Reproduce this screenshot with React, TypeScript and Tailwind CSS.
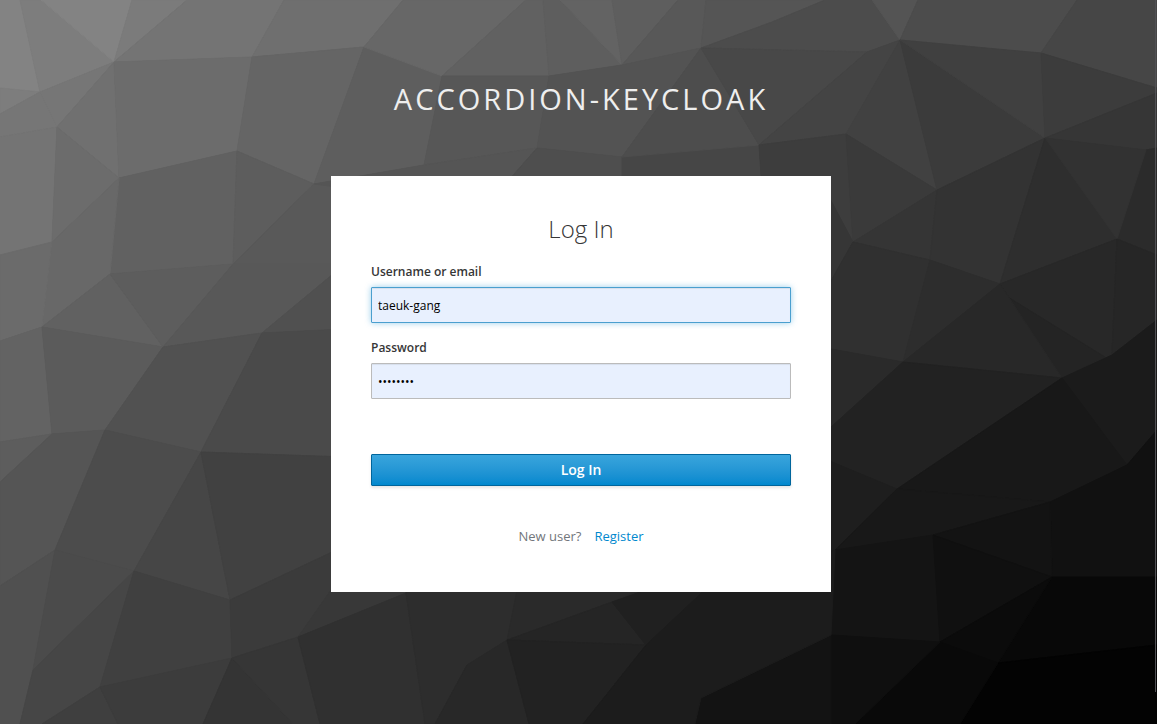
import { useState } from "react";

type Facet = [fill: string, points: string];

// Low-poly backdrop, drawn on a 1157 x 724 canvas.
const facets: Facet[] = [
  // top left
  ["#838383", "0,0 20,0 40,92 0,88"],
  ["#7d7d7d", "0,88 40,92 0,114"],
  ["#7d7d7d", "20,0 41,0 114,62 40,92"],
  ["#838383", "41,0 132,0 114,62"],
  ["#7b7b7b", "132,0 187,0 114,62"],
  ["#747474", "187,0 284,0 252,57 114,62"],
  ["#6f6f6f", "284,0 403,0 364,47 252,57"],
  ["#767676", "0,114 40,92 57,127 0,137"],
  ["#767676", "40,92 114,62 57,127"],
  ["#707070", "114,62 119,178 57,127"],
  ["#747474", "0,137 57,127 52,242 0,255"],
  ["#6c6c6c", "57,127 119,178 52,242"],
  ["#6c6c6c", "114,62 252,57 237,151 119,178"],
  ["#656565", "252,57 364,47 314,184 237,151"],
  ["#616161", "119,178 237,151 233,264 110,274"],
  ["#686868", "119,178 110,274 42,327 52,242"],
  ["#5d5d5d", "237,151 314,184 233,264"],
  ["#595959", "314,184 360,176 360,264 233,264"],
  ["#5e5e5e", "364,47 442,76 424,165 314,184"],
  ["#676767", "403,0 526,0 442,76 364,47"],
  ["#616161", "526,0 543,0 549,76 442,76"],
  ["#5e5e5e", "543,0 560,0 622,65 549,76"],
  ["#636363", "560,0 612,0 622,65"],
  ["#5e5e5e", "612,0 678,0 622,65"],
  ["#585858", "678,0 706,0 701,48 622,65"],
  ["#575757", "442,76 549,76 537,148 424,165"],
  ["#535353", "549,76 622,65 701,48 622,157 537,148"],
  ["#555555", "424,165 537,148 500,190 360,190 314,184"],
  ["#4e4e4e", "537,148 622,157 622,190 500,190"],
  ["#464646", "622,157 759,145 762,190 622,190"],
  ["#4d4d4d", "701,48 759,145 622,157"],
  ["#555555", "706,0 825,0 772,22 701,48"],
  ["#4c4c4c", "772,22 825,0 872,0 900,40 867,52 701,48"],
  ["#545454", "872,0 918,0 900,40"],
  ["#4c4c4c", "918,0 1077,0 1041,53 900,40"],
  ["#464646", "1077,0 1157,0 1157,88 1041,53"],
  ["#484848", "701,48 867,52 759,145"],
  ["#444444", "867,52 900,40 846,134 759,145"],
  ["#3d3d3d", "759,145 846,134 853,242 762,190"],
  // right side
  ["#414141", "900,40 937,190 846,134"],
  ["#3b3b3b", "900,40 1045,138 937,190"],
  ["#404040", "900,40 1041,53 1045,138"],
  ["#3c3c3c", "1041,53 1157,88 1157,93 1045,138"],
  ["#363636", "1045,138 1157,93 1157,148 1146,150"],
  ["#2b2b2b", "1157,148 1157,255 1117,239 1146,150"],
  ["#3a3a3a", "846,134 937,190 853,242"],
  ["#353535", "853,242 937,190 930,260"],
  ["#333333", "937,190 1045,138 1000,284 930,260"],
  ["#2e2e2e", "1045,138 1117,239 1000,284"],
  ["#323232", "1045,138 1146,150 1117,239"],
  ["#363636", "853,242 831,282 820,300 820,180"],
  ["#303030", "853,242 930,260 903,362 820,347 820,300"],
  ["#2d2d2d", "930,260 1000,284 903,362"],
  ["#282828", "1000,284 1117,239 1112,355 1062,378"],
  ["#242424", "1008,297 1105,357 1062,378"],
  ["#262626", "1117,239 1157,255 1157,320 1112,355"],
  ["#282828", "1000,284 1062,378 903,362"],
  ["#2a2a2a", "820,347 903,362 820,437"],
  ["#222222", "903,362 1062,378 897,489 820,457 820,437"],
  ["#1b1b1b", "1062,378 1112,355 1157,320 1157,430 1127,465"],
  ["#181818", "1062,378 1127,465 1050,502 897,489"],
  ["#111111", "1127,465 1157,430 1157,577 1052,577 1050,502"],
  ["#1e1e1e", "820,457 897,489 820,570"],
  ["#181818", "897,489 1050,502 933,535 835,550"],
  ["#131313", "1050,502 1052,577 933,535"],
  ["#141414", "835,550 933,535 940,642 831,635"],
  ["#101010", "933,535 1052,577 940,642"],
  ["#080808", "1052,577 1157,577 1157,645 998,663"],
  ["#0b0b0b", "1052,577 998,663 940,642"],
  ["#030303", "998,663 1157,645 1157,724 960,724"],
  ["#090909", "940,642 998,663 960,724 855,724"],
  ["#0f0f0f", "831,635 940,642 855,724 831,724"],
  ["#131313", "831,635 831,724 695,724 701,698"],
  // left side
  ["#6b6b6b", "0,255 52,242 42,327 0,341"],
  ["#636363", "0,341 42,327 52,434 0,442"],
  ["#616161", "110,274 163,347 42,327"],
  ["#5d5d5d", "110,274 233,264 163,347"],
  ["#585858", "233,264 345,264 262,333 163,347"],
  ["#505050", "345,264 345,329 262,333"],
  ["#5b5b5b", "42,327 163,347 105,430 52,434"],
  ["#515151", "163,347 262,333 201,452 105,430"],
  ["#4a4a4a", "262,333 345,329 345,457 201,452"],
  ["#5d5d5d", "0,442 52,434 0,482"],
  ["#555555", "52,434 105,430 55,550 0,586 0,482"],
  ["#4c4c4c", "105,430 201,452 134,571 55,550"],
  ["#464646", "201,452 230,600 134,571"],
  ["#414141", "201,452 345,457 345,546 230,600"],
  ["#505050", "0,586 55,550 33,670 20,724 0,724"],
  ["#4b4b4b", "55,550 134,571 33,670"],
  ["#464646", "134,571 100,687 42,724 20,724 33,670"],
  ["#404040", "134,571 230,600 232,658 100,687"],
  ["#3b3b3b", "230,600 345,546 331,590 298,637 232,658"],
  ["#3f3f3f", "100,687 118,724 42,724"],
  ["#3c3c3c", "100,687 232,658 203,724 118,724"],
  ["#343434", "232,658 293,724 203,724"],
  ["#363636", "232,658 298,637 320,724 293,724"],
  // bottom
  ["#383838", "298,637 345,570 406,585 406,593"],
  ["#303030", "298,637 406,593 425,724 320,724"],
  ["#2d2d2d", "406,593 406,580 519,580 507,640 467,665 435,724 425,724"],
  ["#2a2a2a", "519,580 660,580 612,602 507,640"],
  ["#282828", "467,665 507,640 529,724 435,724"],
  ["#252525", "507,640 612,602 646,645"],
  ["#222222", "507,640 646,645 583,724 529,724"],
  ["#202020", "612,602 660,585 710,585 646,645"],
  ["#1c1c1c", "710,585 835,550 831,635 701,698 695,724 583,724 646,645"],
];

function Backdrop() {
  return (
    <svg
      aria-hidden="true"
      className="absolute inset-0 h-full w-full"
      viewBox="0 0 1157 724"
      preserveAspectRatio="none"
    >
      {facets.map(([fill, points]) => (
        <polygon key={points} points={points} fill={fill} stroke={fill} strokeWidth="1" />
      ))}
      <path d="M1155.5 0V692" stroke="#505054" strokeWidth="1" />
    </svg>
  );
}

const label = "block text-xs leading-5 font-semibold text-[#363636]";
const field =
  "mt-[5px] block h-9 w-full rounded-[1px] border bg-[#e8f0fe] px-1.5 text-xs text-black outline-none";

export default function App() {
  const [username, setUsername] = useState("taeuk-gang");
  const [password, setPassword] = useState("password");

  return (
    <div className="relative min-h-screen overflow-hidden bg-[#282828] font-['Open_Sans',sans-serif]">
      <Backdrop />
      <div className="relative flex flex-col items-center pt-[81px] pb-8 pl-[5px]">
        <header className="text-center text-[29px] leading-[35px] tracking-[3px] text-[#eeeeee] uppercase">
          Accordion-Keycloak
        </header>
        <main className="mt-[60px] w-full max-w-[500px] bg-white px-10 pt-9 pb-[45px]">
          <h1 className="text-center text-2xl leading-[34px] font-light text-[#363636]">Log In</h1>
          <form className="mt-4" onSubmit={(e) => e.preventDefault()}>
            <label htmlFor="username" className={label}>
              Username or email
            </label>
            <input
              id="username"
              type="text"
              value={username}
              onChange={(e) => setUsername(e.target.value)}
              className={`${field} border-[#4a9fcf] shadow-[inset_0_1px_1px_rgba(3,3,3,0.075),0_0_6px_rgba(0,136,206,0.4)]`}
            />
            <label htmlFor="password" className={`mt-[15px] ${label}`}>
              Password
            </label>
            <input
              id="password"
              type="password"
              value={password}
              onChange={(e) => setPassword(e.target.value)}
              className={`${field} border-[#bbbbbb] shadow-[inset_0_1px_1px_rgba(3,3,3,0.075)]`}
            />
            <button
              type="submit"
              className="mt-[55px] block h-8 w-full rounded-[1px] border border-[#00659c] bg-linear-to-b from-[#39a5dc] to-[#0088ce] text-sm leading-5 font-semibold text-white shadow-[0_2px_3px_rgba(3,3,3,0.1)]"
            >
              Log In
            </button>
          </form>
          <div className="mt-[39px] flex justify-center gap-[13px] text-[13px] leading-[22px]">
            <span className="text-[#72767b]">New user?</span>
            <a href="#register" className="text-[#0088ce]">
              Register
            </a>
          </div>
        </main>
      </div>
    </div>
  );
}
